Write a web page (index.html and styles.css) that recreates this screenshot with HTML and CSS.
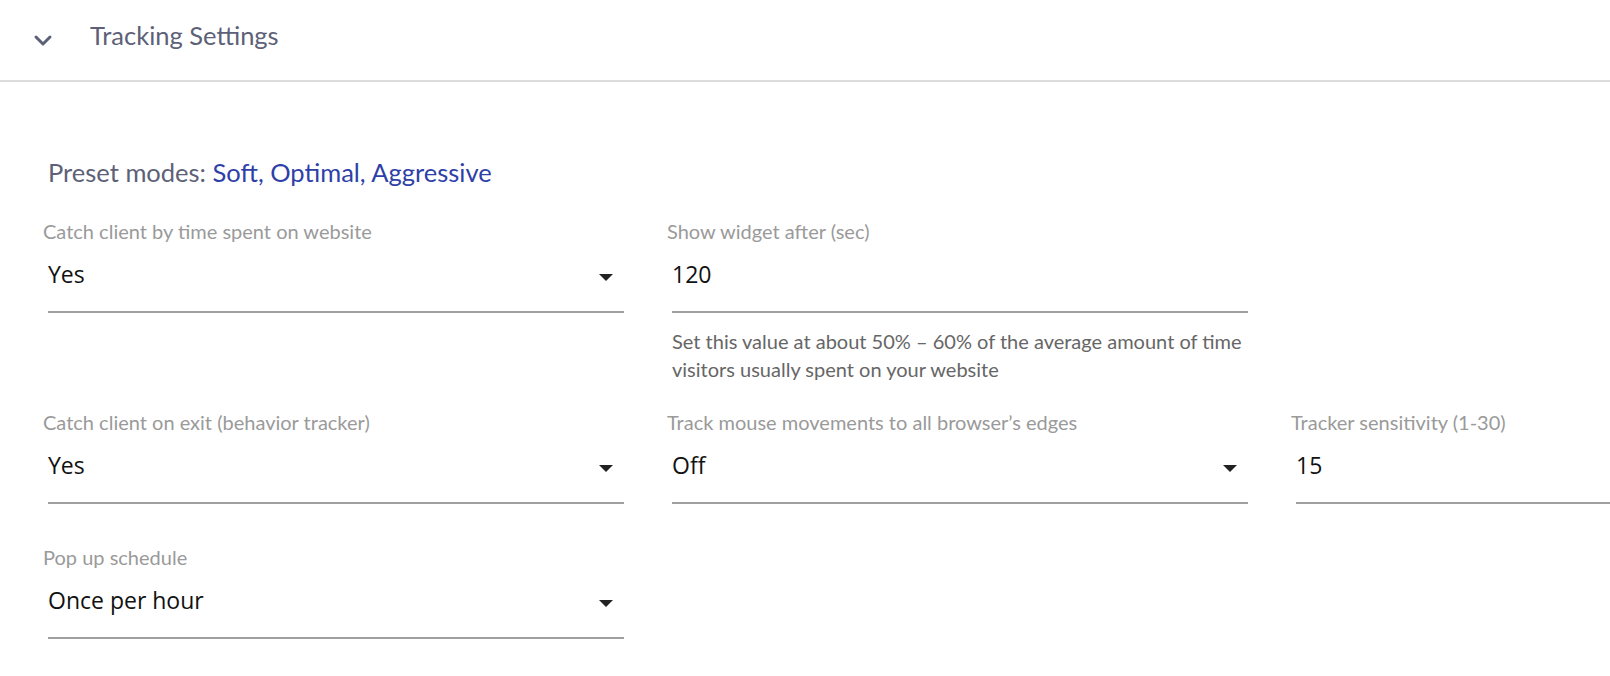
FILE: index.html
```html
<!DOCTYPE html>
<html lang="en">
<head>
<meta charset="utf-8">
<title>Tracking Settings</title>
<link rel="stylesheet" href="styles.css">
</head>
<body>
<div class="panel">
  <header class="panel-header">
    <svg class="chevron" width="20" height="13" viewBox="0 0 20 13"><path d="M3 3 L10 10 L17 3" fill="none" stroke="#5d6178" stroke-width="3" stroke-linecap="round" stroke-linejoin="round"/></svg>
    <h2 class="panel-title">Tracking Settings</h2>
  </header>
  <section class="panel-body">
    <p class="presets">Preset modes: <span class="preset-links">Soft, Optimal, Aggressive</span></p>
    <div class="fields">
      <div class="field">
        <label class="field-label">Catch client by time spent on website</label>
        <div class="field-input select"><span class="value">Yes</span><span class="arrow"></span></div>
      </div>
      <div class="field field--help">
        <label class="field-label">Show widget after (sec)</label>
        <div class="field-input"><span class="value">120</span></div>
        <p class="help">Set this value at about 50% – 60% of the average amount of time visitors usually spent on your website</p>
      </div>
      <div class="field empty"></div>

      <div class="field">
        <label class="field-label">Catch client on exit (behavior tracker)</label>
        <div class="field-input select"><span class="value">Yes</span><span class="arrow"></span></div>
      </div>
      <div class="field">
        <label class="field-label">Track mouse movements to all browser’s edges</label>
        <div class="field-input select"><span class="value">Off</span><span class="arrow"></span></div>
      </div>
      <div class="field">
        <label class="field-label">Tracker sensitivity (1-30)</label>
        <div class="field-input"><span class="value">15</span></div>
      </div>

      <div class="field">
        <label class="field-label">Pop up schedule</label>
        <div class="field-input select"><span class="value">Once per hour</span><span class="arrow"></span></div>
      </div>
    </div>
  </section>
</div>
</body>
</html>
```
FILE: styles.css
```css
html, body {
  margin: 0;
  padding: 0;
  background: #ffffff;
  overflow: hidden;
}
body {
  width: 1610px;
  height: 676px;
  font-family: "Lato", "Open Sans", sans-serif;
}
.panel-header {
  height: 80px;
  border-bottom: 2px solid #dcdcdc;
  display: flex;
  align-items: center;
  padding-left: 33px;
  box-sizing: content-box;
}
.chevron {
  display: block;
  margin-top: 1px;
}
.panel-title {
  margin: -10px 0 0 37px;
  font-size: 25.5px;
  font-weight: 400;
  color: #5d6178;
  line-height: 28px;
}
.panel-body {
  padding: 76px 0 0 48px;
}
.presets {
  margin: 0;
  font-size: 25.5px;
  line-height: 28px;
  color: #5d6178;
}
.preset-links {
  color: #2e3fa8;
}
.fields {
  margin-top: 36px;
  display: grid;
  grid-template-columns: 576px 576px 576px;
  column-gap: 48px;
  row-gap: 30px;
}
.field {
  display: flex;
  flex-direction: column;
  padding-bottom: 14px;
}
.field--help {
  padding-bottom: 0;
}
.field-label {
  margin: -1px 0 0 -5px;
  font-size: 20px;
  line-height: 20px;
  color: #9a9a9a;
  white-space: nowrap;
}
.field-input {
  display: flex;
  align-items: flex-start;
  box-sizing: border-box;
  height: 71px;
  padding-top: 20px;
  border-bottom: 2px solid #a0a0a0;
  margin-top: 1px;
}
.value {
  font-family: "Open Sans", "Lato", sans-serif;
  font-size: 23px;
  line-height: 24px;
  color: #111111;
}
.select .value {
  flex: 1;
}
.arrow {
  width: 0;
  height: 0;
  border-left: 7px solid transparent;
  border-right: 7px solid transparent;
  border-top: 7px solid #222222;
  margin-right: 11px;
  margin-top: 12px;
}
.help {
  margin: 14px 0 0 0;
  font-size: 20px;
  line-height: 28px;
  color: #666666;
}
```
